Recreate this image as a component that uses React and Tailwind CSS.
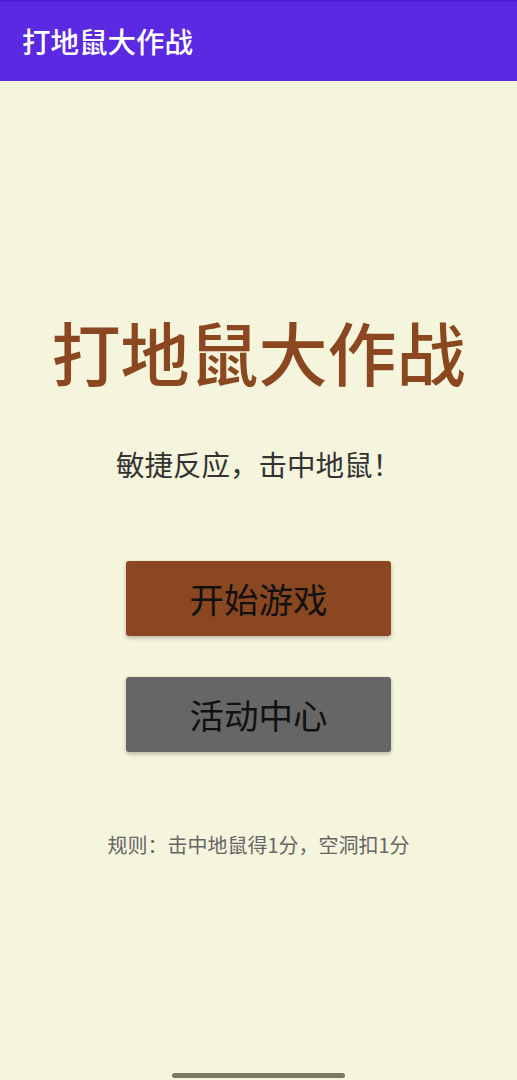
export default function App() {
  const font = { fontFamily: '"Noto Sans CJK SC", "Noto Sans", sans-serif' };
  return (
    <div className="w-[517px] h-[1080px] bg-[#f5f4dc] flex flex-col overflow-hidden" style={font}>
      <div className="h-[81px] bg-[#5a29e1] border-t-2 border-[#4b1ed4] flex items-center pl-[22px] shrink-0">
        <span className="text-[28.5px] leading-none font-medium text-white">打地鼠大作战</span>
      </div>
      <div className="flex flex-col items-center pt-[236px]">
        <div className="text-[69px] leading-none font-medium text-[#8b4720]">打地鼠大作战</div>
        <div className="mt-[64px] text-[28.5px] leading-none text-[#333333]">敏捷反应，击中地鼠！</div>
        <button className="mt-[82px] w-[265px] h-[75px] rounded-[3px] bg-[#8b4720] shadow-[0_2px_4px_rgba(0,0,0,0.25)] flex items-center justify-center text-[34.5px] leading-none text-[#111111]">
          开始游戏
        </button>
        <button className="mt-[41px] w-[265px] h-[75px] rounded-[3px] bg-[#666666] shadow-[0_2px_4px_rgba(0,0,0,0.25)] flex items-center justify-center text-[34.5px] leading-none text-[#111111]">
          活动中心
        </button>
        <div className="mt-[83px] text-[20px] leading-none text-[#666666]">规则：击中地鼠得1分，空洞扣1分</div>
      </div>
      <div className="mt-auto flex justify-center pb-[2px]">
        <div className="w-[173px] h-[5px] rounded-full bg-[#7a7a62]"></div>
      </div>
    </div>
  );
}
